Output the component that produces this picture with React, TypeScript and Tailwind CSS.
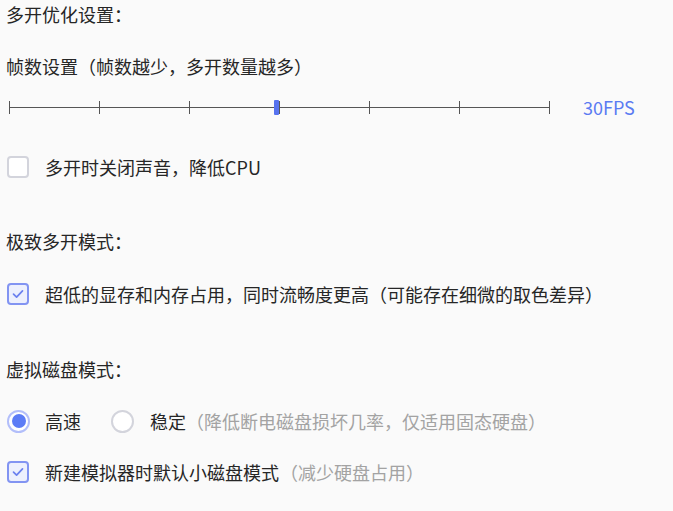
import type { ReactNode } from "react";

const font = {
  fontFamily: '"Noto Sans CJK SC", "Noto Sans", sans-serif',
};

function Checkbox({ checked }: { checked?: boolean }) {
  return checked ? (
    <span className="flex h-[22px] w-[22px] shrink-0 items-center justify-center rounded-[4px] border-2 border-[#8294f2] bg-[#edf0fd]">
      <svg width="12" height="10" viewBox="0 0 12 10" fill="none" aria-hidden>
        <path
          d="M1.5 5.2 L4.6 8.2 L10.5 1.8"
          stroke="#6b80ef"
          strokeWidth="1.7"
          strokeLinecap="round"
          strokeLinejoin="round"
        />
      </svg>
    </span>
  ) : (
    <span className="block h-[22px] w-[22px] shrink-0 rounded-[4px] border-2 border-[#d3d4dc] bg-white" />
  );
}

function Radio({ checked }: { checked?: boolean }) {
  return checked ? (
    <span className="flex h-[23px] w-[23px] shrink-0 items-center justify-center rounded-full border-2 border-[#b2befa] bg-white">
      <span className="block h-[14px] w-[14px] rounded-full bg-[#5c7cf6]" />
    </span>
  ) : (
    <span className="block h-[23px] w-[23px] shrink-0 rounded-full border-2 border-[#d3d4dc] bg-white" />
  );
}

function Row({ className, children }: { className?: string; children: ReactNode }) {
  return <div className={"flex h-[28px] items-center " + (className ?? "")}>{children}</div>;
}

function Slider() {
  const ticks = [0, 90, 180, 270, 360, 450, 540];
  return (
    <div className="flex items-center">
      <svg width="546" height="20" viewBox="0 0 546 20" aria-hidden>
        <line x1="3" y1="10.5" x2="543" y2="10.5" stroke="#555" strokeWidth="1" />
        {ticks.map((t) => (
          <line key={t} x1={t + 3.5} y1="4" x2={t + 3.5} y2="17" stroke="#555" strokeWidth="1" />
        ))}
        <rect x="268" y="3" width="5" height="15" rx="1" fill="#5672ef" />
      </svg>
      <span className="ml-[31px] text-[#5b7bf2]">30FPS</span>
    </div>
  );
}

export default function App() {
  return (
    <div
      className="min-h-[511px] w-[673px] bg-[#fafafa] pl-[6px] text-[18px] leading-none text-[#262626]"
      style={font}
    >
      <Row>多开优化设置：</Row>
      <Row className="mt-[24px]">帧数设置（帧数越少，多开数量越多）</Row>
      <Row className="mt-[13px]">
        <Slider />
      </Row>
      <Row className="mt-[32px]">
        <span className="ml-[1px] block">
          <Checkbox />
        </span>
        <span className="ml-[16px]">多开时关闭声音，降低CPU</span>
      </Row>

      <Row className="mt-[46px]">极致多开模式：</Row>
      <Row className="mt-[25px]">
        <span className="ml-[1px] block">
          <Checkbox checked />
        </span>
        <span className="ml-[16px]">超低的显存和内存占用，同时流畅度更高（可能存在细微的取色差异）</span>
      </Row>

      <Row className="mt-[47px]">虚拟磁盘模式：</Row>
      <Row className="mt-[24px]">
        <span className="ml-[1px] block">
          <Radio checked />
        </span>
        <span className="ml-[15px]">高速</span>
        <span className="ml-[30px] block">
          <Radio />
        </span>
        <span className="ml-[16px]">稳定</span>
        <span className="text-[#a3a3a3]">（降低断电磁盘损坏几率，仅适用固态硬盘）</span>
      </Row>
      <Row className="mt-[23px]">
        <span className="ml-[1px] block">
          <Checkbox checked />
        </span>
        <span className="ml-[16px]">新建模拟器时默认小磁盘模式</span>
        <span className="ml-[1px] text-[#a3a3a3]">（减少硬盘占用）</span>
      </Row>
    </div>
  );
}
